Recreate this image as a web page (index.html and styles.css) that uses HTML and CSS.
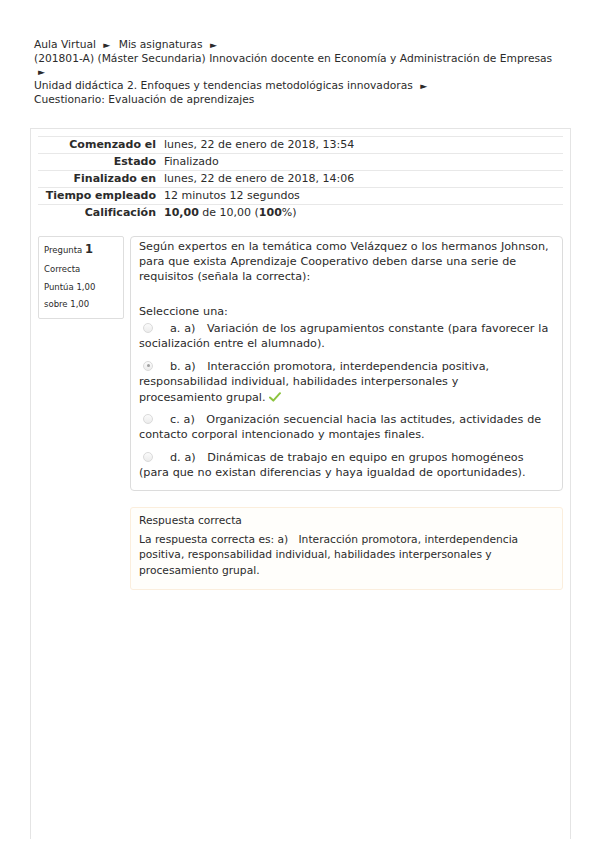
FILE: index.html
```html
<!DOCTYPE html>
<html lang="es">
<head>
<meta charset="utf-8">
<title>Cuestionario: Evaluación de aprendizajes</title>
<link rel="stylesheet" href="styles.css">
</head>
<body>
<div class="page">
  <ul class="crumbs">
    <li>Aula Virtual <span class="sep">►</span></li>
    <li>Mis asignaturas <span class="sep">►</span></li>
    <li>(201801-A) (Máster Secundaria) Innovación docente en Economía y Administración de Empresas <span class="sep">►</span></li>
    <li>Unidad didáctica 2. Enfoques y tendencias metodológicas innovadoras <span class="sep">►</span></li>
    <li>Cuestionario: Evaluación de aprendizajes</li>
  </ul>

  <div class="main">
    <table class="summary">
      <tr><th>Comenzado el</th><td>lunes, 22 de enero de 2018, 13:54</td></tr>
      <tr><th>Estado</th><td>Finalizado</td></tr>
      <tr><th>Finalizado en</th><td>lunes, 22 de enero de 2018, 14:06</td></tr>
      <tr><th>Tiempo empleado</th><td>12 minutos 12 segundos</td></tr>
      <tr><th>Calificación</th><td><b>10,00</b> de 10,00 (<b>100</b>%)</td></tr>
    </table>

    <div class="que">
      <div class="info">
        <div class="qno">Pregunta <span class="num">1</span></div>
        <div class="state">Correcta</div>
        <div class="grade">Puntúa 1,00 sobre 1,00</div>
      </div>
      <div class="content">
        <div class="formulation">
          <div class="qtext">Según expertos en la temática como Velázquez o los hermanos Johnson, para que exista Aprendizaje Cooperativo deben darse una serie de requisitos (señala la correcta):</div>
          <div class="prompt">Seleccione una:</div>
          <div class="answer">
            <div class="opt"><span class="radio"></span><span class="label">a. a)&nbsp;&nbsp; Variación de los agrupamientos constante (para favorecer la socialización entre el alumnado).</span></div>
            <div class="opt"><span class="radio checked"></span><span class="label">b. a)&nbsp;&nbsp; Interacción promotora, interdependencia positiva, responsabilidad individual, habilidades interpersonales y <span class="keep">procesamiento grupal. <svg class="tick" width="12" height="10" viewBox="0 0 12 10"><path d="M1 5.5 L4.3 8.6 L11 1.2" fill="none" stroke="#8cc43f" stroke-width="2" stroke-linecap="round" stroke-linejoin="round"/></svg></span></span></div>
            <div class="opt"><span class="radio"></span><span class="label">c. a)&nbsp;&nbsp; Organización secuencial hacia las actitudes, actividades de contacto corporal intencionado y montajes finales.</span></div>
            <div class="opt"><span class="radio"></span><span class="label">d. a)&nbsp;&nbsp; Dinámicas de trabajo en equipo en grupos homogéneos (para que no existan diferencias y haya igualdad de oportunidades).</span></div>
          </div>
        </div>
        <div class="outcome">
          <div class="fb-title">Respuesta correcta</div>
          <div class="fb-text">La respuesta correcta es: a)&nbsp;&nbsp; Interacción promotora, interdependencia positiva, responsabilidad individual, habilidades interpersonales y procesamiento grupal.</div>
        </div>
      </div>
    </div>
  </div>
</div>
</body>
</html>
```

FILE: styles.css
```css
html, body {
  margin: 0;
  padding: 0;
  background: #fff;
}
body {
  font-family: "DejaVu Sans", Verdana, sans-serif;
  font-size: 10.7px;
  color: #2b2b2b;
}
.page {
  padding: 38px 28px 0 30px;
}
.crumbs {
  list-style: none;
  margin: 0;
  padding: 0 0 0 4px;
  width: 524px;
  line-height: 13px;
}
.crumbs li {
  display: inline-block;
  margin-right: 5px;
}
.sep {
  font-size: 9px;
  margin-left: 4px;
}
.main {
  margin-top: 22px;
  border: 1px solid #e4e4e4;
  border-bottom: none;
  height: 703px;
  padding: 7px 7px 0 7px;
}
.summary {
  width: 100%;
  border-collapse: collapse;
  font-size: 11px;
}
.summary tr {
  border-top: 1px solid #e8e8e8;
}
.summary th, .summary td {
  height: 16px;
  padding: 0;
  line-height: 16px;
}
.summary th {
  width: 118px;
  text-align: right;
  font-weight: bold;
  padding-right: 8px;
}
.summary td {
  text-align: left;
}
.que {
  display: flex;
  align-items: flex-start;
  margin-top: 15px;
  gap: 6px;
}
.info {
  width: 64px;
  border: 1px solid #dedede;
  border-radius: 2px;
  padding: 5px 15px 5px 5px;
  font-size: 8.5px;
  flex: none;
}
.qno {
  line-height: 14px;
}
.num {
  font-size: 11.5px;
  font-weight: bold;
}
.state {
  line-height: 14px;
  margin-top: 5px;
}
.grade {
  line-height: 17px;
  margin-top: 3px;
}
.content {
  flex: 1;
  min-width: 0;
}
.formulation {
  border: 1px solid #dcdcdc;
  border-radius: 4px;
  padding: 2px 8px 9px 8px;
  line-height: 15px;
  font-size: 11.2px;
  word-spacing: 0.3px;
}
.qtext {
  margin-bottom: 20px;
}
.prompt {
  margin-bottom: 2px;
}
.opt {
  margin-bottom: 7px;
  line-height: 15.4px;
}
.opt:last-child {
  margin-bottom: 0;
}
.keep {
  white-space: nowrap;
}
.radio {
  display: inline-block;
  box-sizing: border-box;
  width: 10px;
  height: 10px;
  border: 1px solid #dadada;
  border-radius: 50%;
  background: linear-gradient(#fbfbfb, #ececec);
  vertical-align: -1px;
  margin-left: 4px;
  margin-right: 17px;
  position: relative;
}
.radio.checked::after {
  content: "";
  position: absolute;
  left: 2.5px;
  top: 2.5px;
  width: 3px;
  height: 3px;
  border-radius: 50%;
  background: #a0a0a0;
}
.tick {
  vertical-align: -1px;
}
.outcome {
  margin-top: 16px;
  border: 1px solid #fbeedd;
  border-radius: 3px;
  background: #fffefb;
  padding: 5px 8px 11px 8px;
  line-height: 15.5px;
}
.fb-title {
  line-height: 15px;
  margin-bottom: 4px;
}
```
